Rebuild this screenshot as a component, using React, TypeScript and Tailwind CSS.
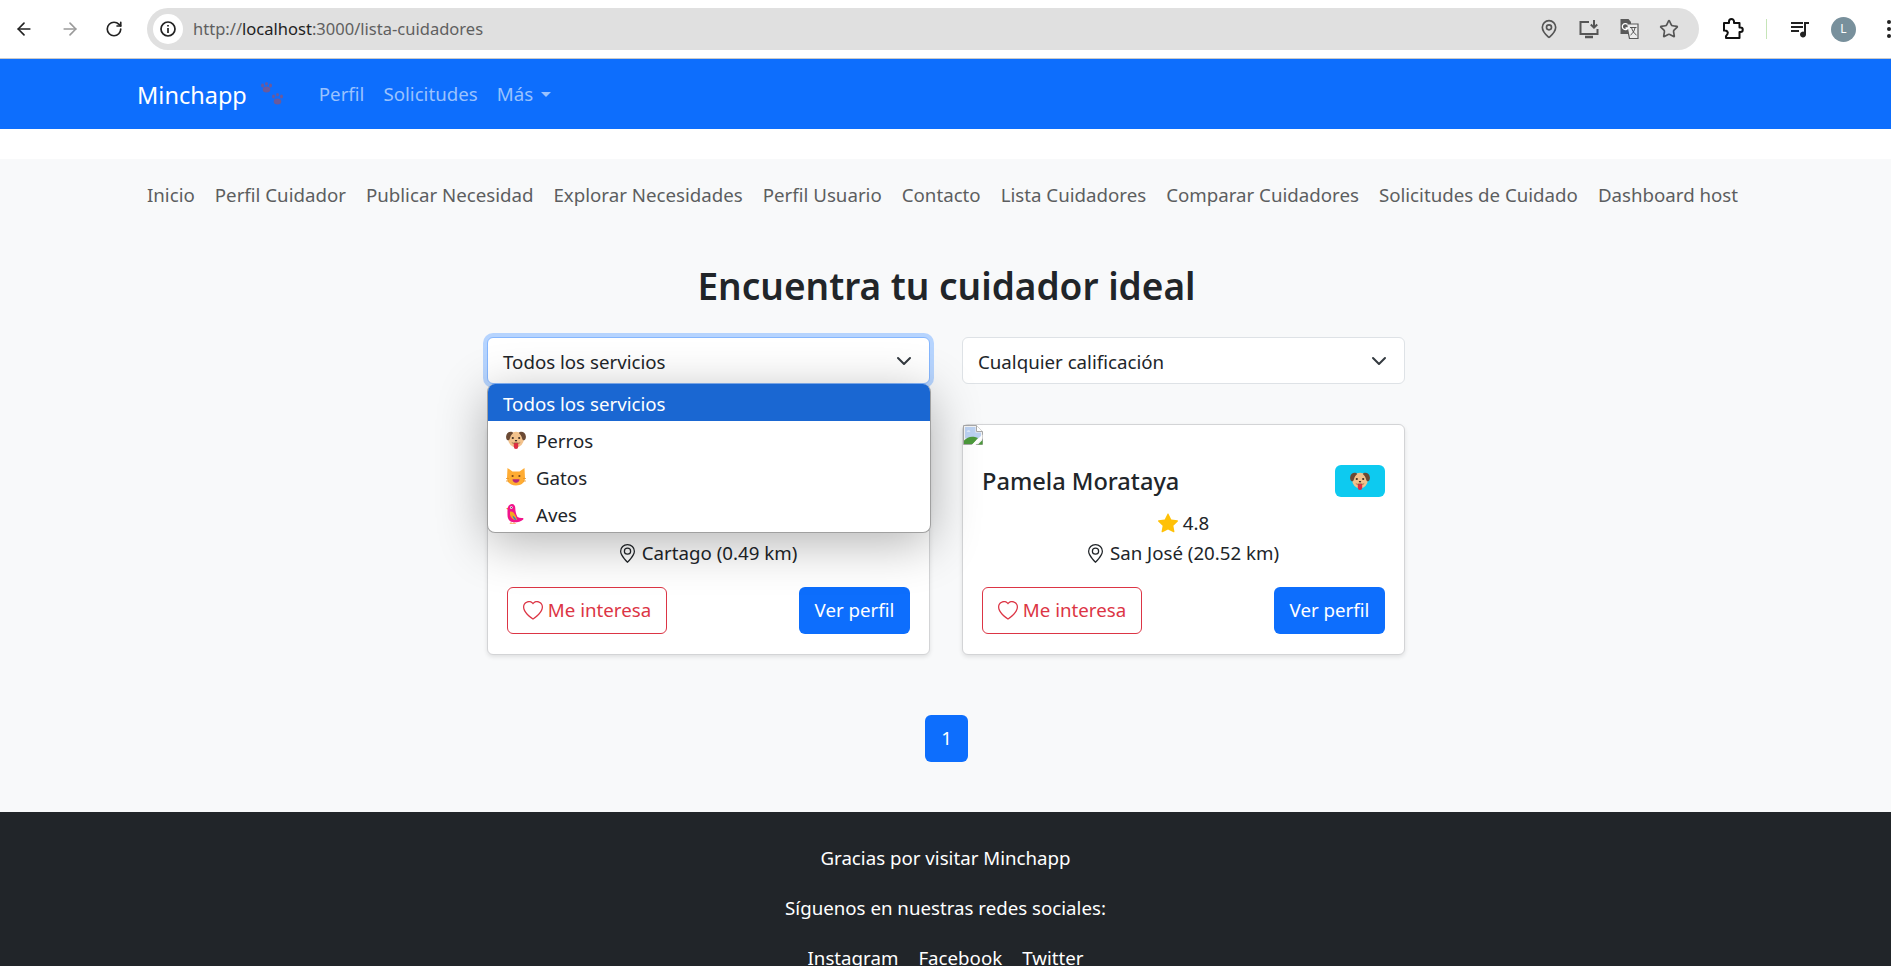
import { ArrowLeft, ArrowRight, RotateCw, Star, MapPin } from "lucide-react";

const DogFace = ({ size = 20 }: { size?: number }) => (
  <svg width={size} height={size} viewBox="0 0 20 20" className="shrink-0">
    <circle cx="10" cy="9.500" r="7.800" fill="#f2c28c" />
    <path d="M5.200 1.800C2.500 1.600.3 3.400.1 6.600c-.1 2 .6 3.300 1.700 3.700 1.300.4 2-1 2.400-2.800.4-1.800 1.700-3.400 3-4.600-.6-.7-1.200-1.100-2-1.100Z" fill="#6b4a34" />
    <path d="M14.800 1.800c2.700-.2 4.900 1.600 5.100 4.800.1 2-.6 3.300-1.700 3.700-1.300.4-2-1-2.400-2.800-.4-1.800-1.700-3.400-3-4.600.6-.7 1.200-1.100 2-1.100Z" fill="#6b4a34" />
    <circle cx="6.800" cy="8" r="1.100" fill="#3d2b20" />
    <circle cx="13.200" cy="8" r="1.100" fill="#3d2b20" />
    <path d="M8.600 10h2.800L10 11.800Z" fill="#2f2320" />
    <path d="M7.800 13h4.400v3.700a2.200 2.200 0 0 1-4.400 0Z" fill="#dd2e44" />
    <path d="M5.800 12.500c1.400 1.200 3 1 4.200-.7 1.200 1.700 2.800 1.900 4.200.7" stroke="#8a5a3a" strokeWidth=".7" fill="none" />
  </svg>
);

const CatFace = () => (
  <svg width="20" height="20" viewBox="0 0 20 20" className="shrink-0">
    <path d="M1.500 1 6.500 4.500h7l5-3.500.5 10c0 4.800-4 7.500-9 7.500s-9-2.700-9-7.500Z" fill="#ffac33" />
    <circle cx="6.600" cy="9" r="1.100" fill="#7a4a1c" />
    <circle cx="13.400" cy="9" r="1.100" fill="#7a4a1c" />
    <path d="M6.500 12.300h7c0 2-1.500 3.500-3.500 3.500s-3.500-1.500-3.500-3.500Z" fill="#b5267a" />
    <path d="M0 11.500h3M0 14h3M17 11.500h3M17 14h3" stroke="#e8952a" strokeWidth=".8" />
  </svg>
);

const Parrot = () => (
  <svg width="20" height="20" viewBox="0 0 20 20" className="shrink-0">
    <path d="M5 18v1.800M8 18v1.800M3.800 19.700h6" stroke="#f9b06a" strokeWidth="1" />
    <path d="M2.500 3.200 0 4.700l2.300 1Z" fill="#f4900c" />
    <path d="M1.800 4C2.500 1 4.500 0 6 0c2 0 3.300 1.800 3.300 4 0 3 .7 6 2.200 9 1.500 1 3.500 1.300 5.800 1v1.500c-2.300 2.200-5.300 2.800-9.300 2.800-4 0-6.500-2.800-6.500-7.300 0-3-.2-5 .3-7Z" fill="#f1148c" />
    <path d="M4 7.500c2.500-.5 4.500 1.500 6 5 .5 1.500.8 2.500 1 3.500-3 .5-6-1.500-7-5Z" fill="#f7a51f" />
    <path d="M6.500 11.500c1.500.5 3 2.500 4 4.500-2 .3-3.500-2-4-4.500Z" fill="#2f7fc4" />
    <circle cx="5.300" cy="3.600" r="1.300" fill="#fff" />
    <circle cx="5.300" cy="3.600" r=".6" fill="#222" />
  </svg>
);

const PinOutline = () => (
  <svg width="15" height="19" viewBox="2 0 12 16" preserveAspectRatio="none" fill="currentColor" className="shrink-0">
    <path d="M12.166 8.940c-.524 1.062-1.234 2.120-1.960 3.070A31.493 31.493 0 0 1 8 14.580a31.481 31.481 0 0 1-2.206-2.570c-.726-.95-1.436-2.008-1.960-3.070C3.304 7.867 3 6.862 3 6a5 5 0 0 1 10 0c0 .862-.305 1.867-.834 2.940zM8 16s6-5.686 6-10A6 6 0 0 0 2 6c0 4.314 6 10 6 10z" />
    <path d="M8 8a2 2 0 1 1 0-4 2 2 0 0 1 0 4zm0 1a3 3 0 1 0 0-6 3 3 0 0 0 0 6z" />
  </svg>
);

const HeartOutline = () => (
  <svg width="20" height="20" viewBox="0 0 16 16" fill="currentColor" className="shrink-0">
    <path d="m8 2.748-.717-.737C5.600.281 2.514.878 1.400 3.053c-.523 1.023-.641 2.500.314 4.385.920 1.815 2.834 3.989 6.286 6.357 3.452-2.368 5.365-4.542 6.286-6.357.955-1.886.838-3.362.314-4.385C13.486.878 10.400.280 8.717 2.010L8 2.748zM8 15C-7.333 4.868 3.279-3.040 7.824 1.143c.06.055.119.112.176.171a3.120 3.120 0 0 1 .176-.170C12.720-3.042 23.333 4.867 8 15z" />
  </svg>
);

const StarFill = () => (
  <svg width="20" height="20" viewBox="0 0 16 16" fill="#ffc107" className="shrink-0">
    <path d="M3.612 15.443c-.386.198-.824-.149-.746-.592l.830-4.730L.173 6.765c-.329-.314-.158-.888.283-.950l4.898-.696L7.538.792c.197-.390.730-.390.927 0l2.184 4.327 4.898.696c.441.062.612.636.282.950l-3.522 3.356.830 4.730c.078.443-.360.790-.746.592L8 13.187l-4.389 2.256z" />
  </svg>
);

const BrokenImage = () => (
  <svg width="20" height="20" viewBox="0 0 20 20" className="block">
    <path d="M.5.500h13l6 6v13H.5Z" fill="#f4f4f4" stroke="#a8a8a8" />
    <path d="M13.500.500v6h6" fill="#fff" stroke="#a8a8a8" />
    <path d="M2 2h10.500v5.500H18v6H2Z" fill="#bcd2f2" />
    <path d="M3.500 6.500c1-1.500 3-1.500 4 0Z" fill="#fff" />
    <path d="M1 19v-3.500c3-3.500 7-4.500 11-3.500l3 1-5 6Z" fill="#4c9a3c" />
    <path d="m19.500 9.500-11 10.500h4l7-6.500Z" fill="#fff" />
    <path d="M15 19.500 19.500 15v4.500Z" fill="#4c9a3c" />
  </svg>
);

const SelectBox = ({ label, focused }: { label: string; focused?: boolean }) => (
  <div
    className={`flex h-[47px] items-center justify-between rounded-md border bg-white pl-[15px] pr-[17px] text-[#212529] ${
      focused ? "border-[#86b7fe] shadow-[0_0_0_4px_#b6d4fe]" : "border-[#dee2e6]"
    }`}
  >
    <span className="pt-[3px]">{label}</span>
    <svg width="16" height="16" viewBox="0 0 16 16" fill="none" stroke="#343a40" strokeWidth="2" strokeLinecap="round" strokeLinejoin="round">
      <path d="m2 5 6 6 6-6" />
    </svg>
  </div>
);

const Card = ({ name, rating, place, showImage }: { name?: string; rating?: string; place: string; showImage?: boolean }) => (
  <div className="flex h-[231px] flex-col rounded-md border border-[#d3d4d6] bg-white shadow-[0_2px_4px_rgba(0,0,0,0.1)]">
    <div className="h-[20px]">{showImage && <BrokenImage />}</div>
    <div className="flex flex-1 flex-col px-[19px] pt-[20px]">
      <div className="flex h-[32px] items-center justify-between">
        <span className="pt-[2px] text-[23.600px] font-medium leading-none text-[#212529]">{name}</span>
        <span className="flex h-[32px] w-[50px] items-center justify-center rounded-md bg-[#0dcaf0]">
          <DogFace />
        </span>
      </div>
      <div className="mt-[11px] flex h-[30px] items-center justify-center gap-[5px] text-[#212529]">
        <StarFill />
        {rating && <span>{rating}</span>}
      </div>
      <div className="flex h-[30px] items-center justify-center gap-[7px] text-[#212529]">
        <PinOutline />
        <span>{place}</span>
      </div>
      <div className="mt-[19px] flex items-center justify-between">
        <button className="flex h-[47px] w-[160px] items-center justify-center gap-[5px] rounded-md border border-[#dc3545] text-[#dc3545]">
          <HeartOutline />
          Me interesa
        </button>
        <button className="flex h-[47px] w-[111px] items-center justify-center rounded-md bg-[#0d6efd] text-white">
          Ver perfil
        </button>
      </div>
    </div>
  </div>
);

const navLinks = [
  "Inicio",
  "Perfil Cuidador",
  "Publicar Necesidad",
  "Explorar Necesidades",
  "Perfil Usuario",
  "Contacto",
  "Lista Cuidadores",
  "Comparar Cuidadores",
  "Solicitudes de Cuidado",
  "Dashboard host",
];

const BrowserBar = () => (
  <div className="flex h-[59px] shrink-0 items-center overflow-hidden border-b border-[#c9c9c9] bg-white pl-[14px]">
    <ArrowLeft size={20} color="#222" strokeWidth={2} className="shrink-0" />
    <ArrowRight size={20} color="#9a9a9a" strokeWidth={2} className="ml-[26px] shrink-0" />
    <RotateCw size={18} color="#222" strokeWidth={2.200} className="ml-[25px] shrink-0" />
    <div className="ml-[24px] flex h-[42px] w-[1552px] shrink-0 items-center rounded-full bg-[#e0e0e0] pl-[6px] pr-[20px]">
      <span className="flex h-[30px] w-[30px] items-center justify-center rounded-full bg-white">
        <svg width="18" height="18" viewBox="0 0 18 18" fill="none" stroke="#222" strokeWidth="1.700">
          <circle cx="9" cy="9" r="7" />
          <path d="M9 8v5M9 5v1.600" />
        </svg>
      </span>
      <span className="ml-[10px] text-[16.550px] text-[#5f5f5f]">
        http://<span className="text-[#222]">localhost</span>:3000/lista-cuidadores
      </span>
      <div className="ml-auto flex items-center gap-[20px] text-[#555]">
        <MapPin size={20} strokeWidth={2} />
        <svg width="20" height="20" viewBox="0 0 20 20" fill="none" stroke="#555" strokeWidth="2">
          <path d="M10 3H1.500v12h17v-5" />
          <path d="M15 1v7.500M11.800 5.500 15 8.700l3.200-3.200" />
          <path d="M6 18h8" strokeWidth="2.500" />
        </svg>
        <svg width="20" height="20" viewBox="0 0 20 20">
          <path d="M1.500 0h8l2.500 3v12H1.500Z" fill="#5a5a5a" />
          <path d="M7.500 5h11.500v14.500H10.500Z" fill="#ececec" stroke="#5a5a5a" strokeWidth="1.200" />
          <path d="M11 8.500h6.500M12.500 8.500c1 3.500 2.500 6 5 7.500M16 8.500c-.6 3.500-2.200 6-4.500 7.500" stroke="#555" strokeWidth="1" fill="none" />
          <path d="M8.500 5.500A3 3 0 1 0 9 9H6.500" stroke="#fff" strokeWidth="1.300" fill="none" />
        </svg>
        <Star size={20} strokeWidth={2} />
      </div>
    </div>
    <svg width="24" height="24" viewBox="0 0 24 24" fill="none" stroke="#111" strokeWidth="2" strokeLinejoin="round" className="ml-[22px] shrink-0">
      <path d="M3 6h5V4.500a2.500 2.500 0 0 1 5 0V6h5.500v4.500h1a2.200 2.200 0 0 1 0 4.500h-1V21H5c-.5-2 .5-3 1.500-4 1-1.500-.5-4-3.500-3.500Z" />
    </svg>
    <span className="ml-[21px] h-[20px] w-px shrink-0 bg-[#c6e5b8]" />
    <svg width="22" height="22" viewBox="0 0 22 22" className="ml-[22px] shrink-0" fill="#222">
      <path d="M2 4h12v2H2ZM2 8h12v2H2ZM2 12h8v2H2ZM15 4h5v2h-3v10.500a3 3 0 1 1-2-2.800Z" />
    </svg>
    <span className="ml-[20px] flex h-[25px] w-[25px] shrink-0 items-center justify-center rounded-full bg-[#78909c] text-[12px] text-white">
      L
    </span>
    <div className="ml-[31px] flex shrink-0 flex-col gap-[3px]">
      <span className="h-[4px] w-[4px] rounded-full bg-[#222]" />
      <span className="h-[4px] w-[4px] rounded-full bg-[#222]" />
      <span className="h-[4px] w-[4px] rounded-full bg-[#222]" />
    </div>
  </div>
);

const PawPrint = () => (
  <svg width="25" height="24" viewBox="0 0 25 24" fill="#6a5a9c" className="ml-[12px] shrink-0">
    <ellipse cx="3.500" cy="3.500" rx="1.500" ry="2" />
    <ellipse cx="7.500" cy="1.800" rx="1.500" ry="1.800" />
    <ellipse cx="11.500" cy="3.500" rx="1.500" ry="2" />
    <ellipse cx="7.500" cy="7.500" rx="3.800" ry="3" />
    <ellipse cx="14.500" cy="14.500" rx="1.500" ry="2" />
    <ellipse cx="18.500" cy="12.800" rx="1.500" ry="1.800" />
    <ellipse cx="22.500" cy="14.500" rx="1.500" ry="2" />
    <ellipse cx="18.500" cy="19.500" rx="3.800" ry="3" />
  </svg>
);

export default function App() {
  return (
    <div className="flex h-[966px] flex-col overflow-hidden bg-white font-['Noto_Sans',sans-serif] text-[18.700px]">
      <BrowserBar />
      <nav className="flex h-[70px] shrink-0 items-center bg-[#0d6efd] pl-[137px]">
        <span className="pt-[3px] text-[23.500px] text-white">Minchapp</span>
        <PawPrint />
        <div className="ml-[35px] flex items-center gap-[19px] pt-[1px] text-[#9ac2fe]">
          <span>Perfil</span>
          <span>Solicitudes</span>
          <span className="flex items-center gap-[8px]">
            Más
            <span className="h-0 w-0 border-x-[5px] border-t-[5px] border-x-transparent border-t-[#9ac2fe]" />
          </span>
        </div>
      </nav>
      <div className="h-[30px] shrink-0 bg-white" />
      <main className="flex h-[653px] shrink-0 flex-col bg-[#f8f9fa]">
        <div className="mt-[24px] flex h-[24px] items-center justify-center gap-[20px] pr-[6px] text-[#5c5e60]">
          {navLinks.map((l) => (
            <span key={l} className="whitespace-nowrap">
              {l}
            </span>
          ))}
        </div>
        <h1 className="mt-[52px] h-[54px] pl-[2px] text-center text-[37px] font-semibold leading-[54px] text-[#212529]">
          Encuentra tu cuidador ideal
        </h1>
        <div className="mt-[24px] flex justify-center pl-[1px]">
          <div className="relative grid w-[918px] grid-cols-2 gap-x-[32px]">
            <SelectBox label="Todos los servicios" focused />
            <SelectBox label="Cualquier calificación" />
            <div className="col-span-2 mt-[40px] grid grid-cols-2 gap-x-[32px]">
              <Card place="Cartago (0.49 km)" />
              <Card name="Pamela Morataya" rating="4.8" place="San José (20.52 km)" showImage />
            </div>
            <div className="absolute left-0 top-[47px] w-[444px] overflow-hidden rounded-lg border-x border-b border-[#a0a0a0] bg-white text-[#212529] shadow-[0_10px_50px_rgba(0,0,0,0.3)]">
              <div className="flex h-[37px] items-center bg-[#1a67d2] pl-[15px] pt-[3px] text-white">Todos los servicios</div>
              {[
                { label: "Perros", icon: <DogFace /> },
                { label: "Gatos", icon: <CatFace /> },
                { label: "Aves", icon: <Parrot /> },
              ].map((o) => (
                <div key={o.label} className="flex h-[37px] items-center gap-[10px] pl-[18px]">
                  {o.icon}
                  <span className="pt-[3px]">{o.label}</span>
                </div>
              ))}
            </div>
          </div>
        </div>
        <div className="mt-[60px] flex justify-center pl-[2px]">
          <span className="flex h-[47px] w-[43px] items-center justify-center rounded-md bg-[#0d6efd] text-white">1</span>
        </div>
      </main>
      <footer className="flex-1 bg-[#212529] text-center text-white">
        <p className="mt-[34px] h-[24px] leading-[24px]">Gracias por visitar Minchapp</p>
        <p className="mt-[26px] h-[24px] leading-[24px]">Síguenos en nuestras redes sociales:</p>
        <div className="mt-[26px] flex h-[24px] items-center justify-center gap-[20px] leading-[24px]">
          <span>Instagram</span>
          <span>Facebook</span>
          <span>Twitter</span>
        </div>
      </footer>
    </div>
  );
}
